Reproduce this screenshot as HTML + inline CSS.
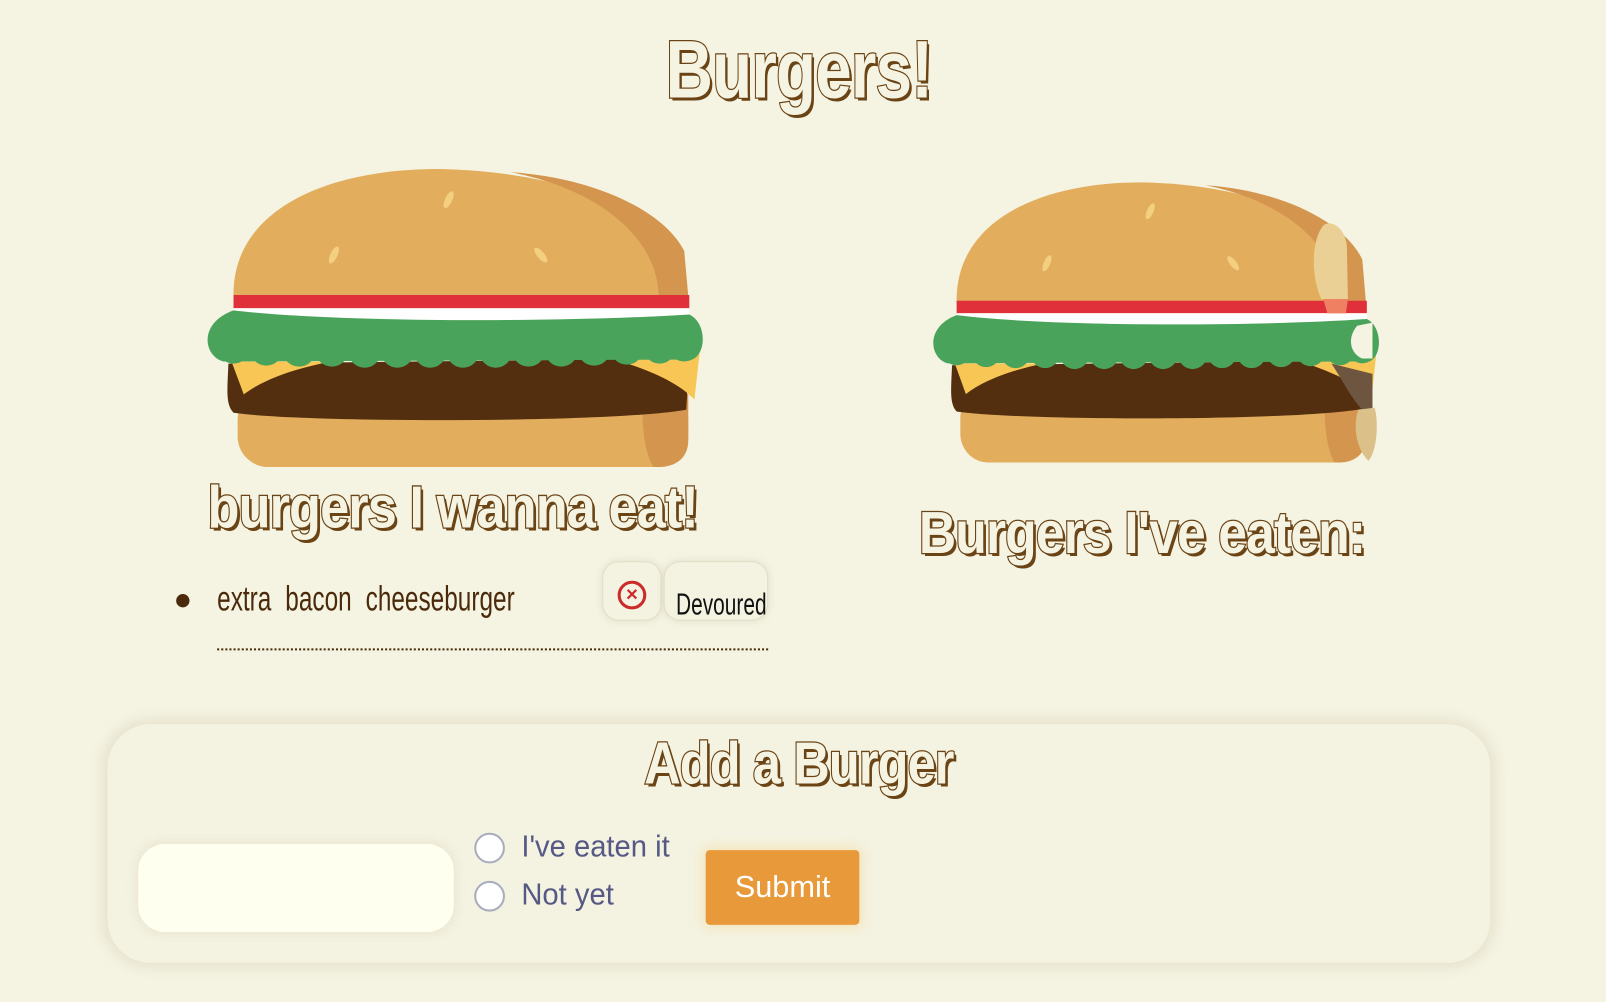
<!DOCTYPE html>
<html><head><meta charset="utf-8"><style>
html,body{margin:0;padding:0;background:#f5f4e3;width:1606px;height:1002px;overflow:hidden}
#w{position:absolute;left:0;top:0;width:1568px;height:978px;transform:scale(1.02423);transform-origin:0 0;font-family:"Liberation Sans",sans-serif}
.t{position:absolute;font-family:"Liberation Sans",sans-serif;font-weight:bold;color:#f5f3e2;-webkit-text-stroke:2.5px #6b4416;paint-order:stroke fill;text-shadow:3px 3px 0 #6b4416;text-align:center;white-space:nowrap;letter-spacing:-1px;transform-origin:50% 50%}
.box{position:absolute;left:105px;top:707px;width:1350px;height:233px;border-radius:42px;background:#f4f3e2;box-shadow:0 0 14px 4px rgba(200,190,160,.35)}
.radio{position:absolute;width:30px;height:30px;border-radius:50%;border:2px solid #a8adbd;background:#fff;box-sizing:border-box}
.lab{position:absolute;font-size:30px;color:#555983;transform:scaleX(0.95);transform-origin:0 0}
</style></head><body><div id="w">
<div class="t" style="left:580px;top:22px;width:400px;font-size:80px;transform:scaleX(0.8)">Burgers!</div>

<svg style="position:absolute;left:0;top:0" width="1568" height="978">
<defs>
<g id="bg">
 <path d="M30,125 C28,40 120,0 230,0 C350,2 440,40 470,80 L474,125 Z" fill="#e2ae5e"/>
 <path d="M300,3 C380,8 450,40 470,80 L474,125 L445,125 C445,70 390,20 300,3 Z" fill="#d4964f"/>
 <ellipse cx="240" cy="30" rx="3.5" ry="9" transform="rotate(25 240 30)" fill="#f3cf80"/>
 <ellipse cx="128" cy="84" rx="3.5" ry="9" transform="rotate(25 128 84)" fill="#f3cf80"/>
 <ellipse cx="330" cy="84" rx="3.5" ry="9" transform="rotate(-40 330 84)" fill="#f3cf80"/>
 <rect x="34" y="215" width="440" height="76" rx="30" fill="#e2ae5e"/>
 <path d="M430,220 L474,220 L474,265 C474,282 462,291 445,291 L440,291 C430,275 428,245 430,220 Z" fill="#d4964f"/>
 <path d="M25,190 L475,185 L472,235 C400,248 100,248 30,238 C22,230 24,215 25,190 Z" fill="#532f10"/>
 <path d="M28,188 L125,188 C90,195 60,205 40,220 Z" fill="#f7c654"/>
 <path d="M400,185 L485,180 L480,225 C460,205 430,195 400,185 Z" fill="#f7c654"/>
 <rect x="30" y="123" width="445" height="13" fill="#e0303a"/>
 <path d="M30,136 L475,136 L475,144 C350,150 130,150 30,144 Z" fill="#fff"/>
 <path d="M30,138 C130,150 350,150 475,142 C492,150 492,180 478,186 L20,188 C0,182 -4,150 30,138 Z" fill="#4aa35a"/>
 <g fill="#4aa35a">
  <circle cx="30" cy="174" r="16"/><circle cx="62" cy="176" r="16"/><circle cx="94" cy="177" r="16"/><circle cx="126" cy="177" r="16"/><circle cx="158" cy="178" r="16"/><circle cx="190" cy="178" r="16"/><circle cx="222" cy="178" r="16"/><circle cx="254" cy="178" r="16"/><circle cx="286" cy="178" r="16"/><circle cx="318" cy="177" r="16"/><circle cx="350" cy="177" r="16"/><circle cx="382" cy="176" r="16"/><circle cx="414" cy="175" r="16"/><circle cx="446" cy="174" r="16"/><circle cx="470" cy="172" r="16"/>
 </g>
</g>
</defs>
<use href="#bg" transform="translate(198,165)"/>
<g transform="translate(907,178) scale(0.9,0.94)">
 <use href="#bg"/>
</g>
<path d="M1292,220 C1280,235 1280,270 1290,292 L1316,292 L1315,240 C1313,222 1300,214 1292,220 Z" fill="#ebd095"/>
<path d="M1292,292 L1316,292 L1314,306 L1296,306 Z" fill="#f08062"/>
<path d="M1300,355 C1310,370 1320,390 1330,400 L1340,400 L1340,365 Z" fill="#6e5540"/>
<path d="M1326,400 C1320,420 1326,440 1336,450 C1345,440 1346,410 1342,398 Z" fill="#dcc08a"/>
<path d="M1325,318 C1315,330 1318,345 1330,350 L1340,350 L1340,315 Z" fill="#f5f4e3"/>
</svg>

<div class="t" style="left:142px;top:462px;width:600px;font-size:58px;transform:scaleX(0.88)">burgers I wanna eat!</div>
<div class="t" style="left:815px;top:487px;width:600px;font-size:58px;transform:scaleX(0.87)">Burgers I've eaten:</div>

<div style="position:absolute;left:172px;top:580px;width:13px;height:13px;border-radius:50%;background:#4a2a0a"></div>
<div style="position:absolute;left:212px;top:566px;font-family:'Liberation Sans',sans-serif;font-size:34px;color:#4a2a0a;word-spacing:10px;transform:scaleX(0.7);transform-origin:0 0;white-space:nowrap">extra bacon cheeseburger</div>
<div style="position:absolute;left:212px;top:633px;width:538px;border-top:2px dotted #4a2a0a"></div>
<div style="position:absolute;left:588px;top:548px;width:56px;height:56px;border-radius:16px;border:1px solid #e0ddc8;background:#f4f3e2;box-shadow:0 0 8px rgba(200,190,160,.4)"></div>
<div style="position:absolute;left:603px;top:567px;width:22px;height:22px;border-radius:50%;border:3px solid #cc2b2b;color:#cc2b2b;font:bold 20px/22px 'Liberation Sans',sans-serif;text-align:center">×</div>
<div style="position:absolute;left:648px;top:548px;width:100px;height:56px;border-radius:16px;border:1px solid #e0ddc8;background:#f4f3e2;box-shadow:0 0 8px rgba(200,190,160,.4)"></div>
<div style="position:absolute;left:660px;top:574px;font-family:'Liberation Sans',sans-serif;font-size:30px;color:#111;transform:scaleX(0.68);transform-origin:0 0;white-space:nowrap">Devoured</div>

<div class="box"></div>
<div class="t" style="left:530px;top:712px;width:500px;font-size:58px;transform:scaleX(0.85)">Add a Burger</div>
<div style="position:absolute;left:135px;top:824px;width:308px;height:86px;border-radius:26px;background:#fffff0;box-shadow:0 0 10px 3px rgba(220,210,180,.35)"></div>
<div class="radio" style="left:463px;top:813px"></div>
<div class="radio" style="left:463px;top:860px"></div>
<div class="lab" style="left:509px;top:810px">I've eaten it</div>
<div class="lab" style="left:509px;top:857px">Not yet</div>
<div style="position:absolute;left:689px;top:830px;width:150px;height:73px;border-radius:4px;background:#e8993a;color:#fff;font-size:30px;line-height:73px;text-align:center;box-shadow:0 0 12px 3px rgba(245,215,150,.5)">Submit</div>
</div></body></html>
